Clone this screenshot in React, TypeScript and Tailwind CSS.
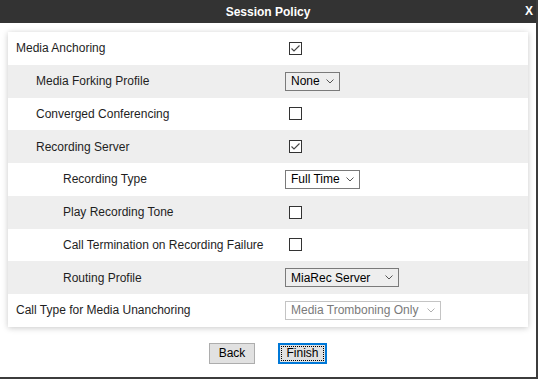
import React from "react";

const Check = ({ checked }: { checked: boolean }) => (
  <span className="ml-[4px] flex h-[13px] w-[13px] items-center justify-center border border-[#333] bg-white">
    {checked && (
      <svg width="11" height="11" viewBox="0 0 11 11">
        <polyline points="1.5,5.5 4,8 9.5,2.5" fill="none" stroke="#444" strokeWidth="1.1" />
      </svg>
    )}
  </span>
);

const Select = ({ value, w, disabled }: { value: string; w: string; disabled?: boolean }) => (
  <div
    className={`flex h-[19px] items-center justify-between border pl-[5px] pr-[5px] text-[12px] leading-none ${w} ${
      disabled ? "border-[#c4c4c4] text-[#7a7a7a]" : "border-[#7a7a7a] text-black"
    }`}
  >
    <span>{value}</span>
    <svg width="8" height="5" viewBox="0 0 8 5">
      <polyline points="0.5,0.5 4,4 7.5,0.5" fill="none" stroke={disabled ? "#b0b0b0" : "#555"} strokeWidth="1" />
    </svg>
  </div>
);

type Row = { label: string; indent: string; ctrl: React.ReactNode };

const rows: Row[] = [
  { label: "Media Anchoring", indent: "pl-[8px]", ctrl: <Check checked /> },
  { label: "Media Forking Profile", indent: "pl-[28px]", ctrl: <Select value="None" w="w-[55px]" /> },
  { label: "Converged Conferencing", indent: "pl-[28px]", ctrl: <Check checked={false} /> },
  { label: "Recording Server", indent: "pl-[28px]", ctrl: <Check checked /> },
  { label: "Recording Type", indent: "pl-[55px]", ctrl: <Select value="Full Time" w="w-[75px]" /> },
  { label: "Play Recording Tone", indent: "pl-[55px]", ctrl: <Check checked={false} /> },
  { label: "Call Termination on Recording Failure", indent: "pl-[55px]", ctrl: <Check checked={false} /> },
  { label: "Routing Profile", indent: "pl-[55px]", ctrl: <Select value="MiaRec Server" w="w-[114px]" /> },
  {
    label: "Call Type for Media Unanchoring",
    indent: "pl-[8px]",
    ctrl: <Select value="Media Tromboning Only" w="w-[156px]" disabled />,
  },
];

export default function App() {
  return (
    <div className="relative h-[379px] w-[538px] border-b-2 border-r-2 border-[#3c3c3c] bg-white font-['Liberation_Sans',Arial,sans-serif] text-[12px] text-[#1e1e1e]">
      <div className="flex h-[23px] items-center justify-center bg-[#333333] text-[12px] font-bold text-white">
        Session Policy
      </div>
      <span className="absolute right-[3px] top-[5px] text-[12px] font-bold leading-none text-white">X</span>

      <div className="ml-[8px] mt-[9px] w-[520px] bg-white shadow-[0_1px_6px_rgba(0,0,0,0.22)]">
        {rows.map((r, i) => (
          <div
            key={r.label}
            className={`grid h-[32.75px] grid-cols-[277px_1fr] items-center ${i % 2 === 1 ? "bg-[#eeeeee]" : "bg-white"}`}
          >
            <div className={r.indent}>{r.label}</div>
            <div className="flex items-center">{r.ctrl}</div>
          </div>
        ))}
      </div>

      <div className="mt-[16px] flex justify-center gap-[23px]">
        <button className="flex h-[21px] w-[46px] items-center justify-center border border-[#adadad] bg-[#e1e1e1] text-[12px] text-black">
          Back
        </button>
        <button className="flex h-[21px] w-[49px] items-center justify-center border-2 border-[#0078d7] bg-[#e1e1e1] p-[1px] text-[12px] text-black">
          <span className="flex h-full w-full items-center justify-center border border-dotted border-black">Finish</span>
        </button>
      </div>
    </div>
  );
}
